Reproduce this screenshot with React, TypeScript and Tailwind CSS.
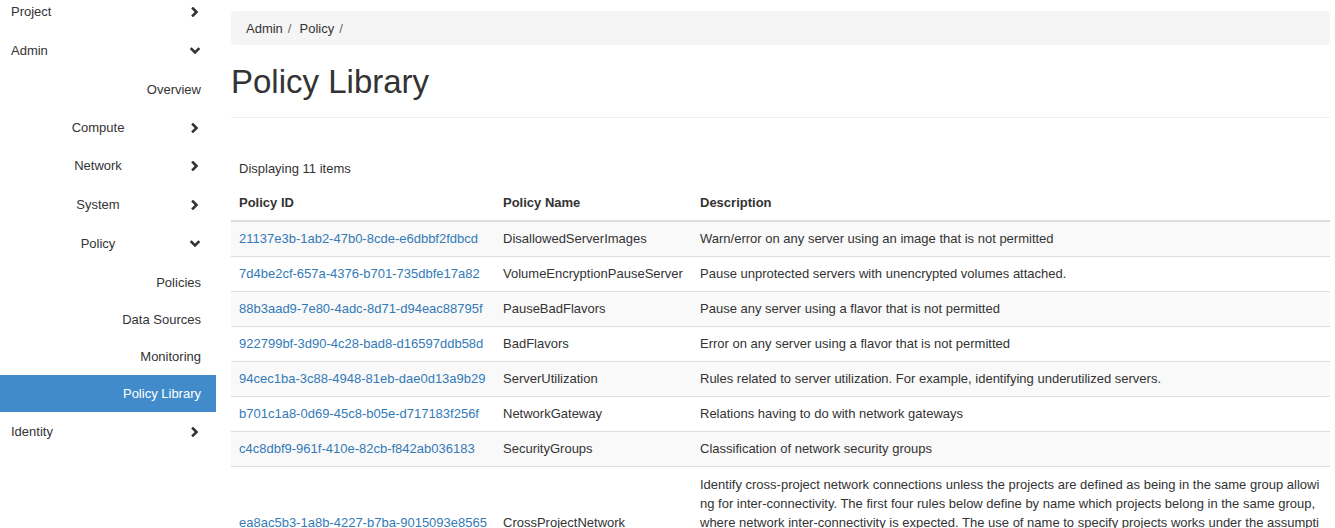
const Chevron = ({ down }: { down?: boolean }) => (
  <svg width="10" height="10" viewBox="0 0 10 10" className="shrink-0">
    {down ? (
      <polyline points="1.5,3 5,6.5 8.5,3" fill="none" stroke="#333" strokeWidth="2.6" strokeLinecap="square" />
    ) : (
      <polyline points="3,1.5 6.5,5 3,8.5" fill="none" stroke="#333" strokeWidth="2.6" strokeLinecap="square" />
    )}
  </svg>
)

const rows = [
  ["21137e3b-1ab2-47b0-8cde-e6dbbf2fdbcd", "DisallowedServerImages", "Warn/error on any server using an image that is not permitted"],
  ["7d4be2cf-657a-4376-b701-735dbfe17a82", "VolumeEncryptionPauseServer", "Pause unprotected servers with unencrypted volumes attached."],
  ["88b3aad9-7e80-4adc-8d71-d94eac88795f", "PauseBadFlavors", "Pause any server using a flavor that is not permitted"],
  ["922799bf-3d90-4c28-bad8-d16597ddb58d", "BadFlavors", "Error on any server using a flavor that is not permitted"],
  ["94cec1ba-3c88-4948-81eb-dae0d13a9b29", "ServerUtilization", "Rules related to server utilization. For example, identifying underutilized servers."],
  ["b701c1a8-0d69-45c8-b05e-d717183f256f", "NetworkGateway", "Relations having to do with network gateways"],
  ["c4c8dbf9-961f-410e-82cb-f842ab036183", "SecurityGroups", "Classification of network security groups"],
  [
    "ea8ac5b3-1a8b-4227-b7ba-9015093e8565",
    "CrossProjectNetwork",
    "Identify cross-project network connections unless the projects are defined as being in the same group allowing for inter-connectivity. The first four rules below define by name which projects belong in the same group, where network inter-connectivity is expected. The use of name to specify projects works under the assumption of having unique project names; the Keystone Identity v3 API does not require project names to be unique. Adjust the first four rules to use project IDs instead of project names where necessary.",
  ],
]

const Sidebar = () => {
  return (
    <div className="w-[216px] shrink-0 -mt-[8px] text-[13px] text-[#333]">
      <div className="h-[39px] flex items-center pl-[11px] pr-[16px]">
        <span className="flex-1">Project</span>
        <Chevron />
      </div>
      <div className="h-[40px] flex items-center pl-[11px] pr-[16px]">
        <span className="flex-1">Admin</span>
        <Chevron down />
      </div>
      <div className="h-[38px] flex items-center justify-end pr-[15px]">Overview</div>
      <div className="h-[37px] flex items-center pl-[6px] pr-[16px]">
        <span className="flex-1 text-center">Compute</span>
        <Chevron />
      </div>
      <div className="h-[39px] flex items-center pl-[6px] pr-[16px]">
        <span className="flex-1 text-center">Network</span>
        <Chevron />
      </div>
      <div className="h-[39px] flex items-center pl-[6px] pr-[16px]">
        <span className="flex-1 text-center">System</span>
        <Chevron />
      </div>
      <div className="h-[40px] flex items-center pl-[6px] pr-[16px]">
        <span className="flex-1 text-center">Policy</span>
        <Chevron down />
      </div>
      <div className="h-[37px] flex items-center justify-end pr-[15px]">Policies</div>
      <div className="h-[37px] flex items-center justify-end pr-[15px]">Data Sources</div>
      <div className="h-[37px] flex items-center justify-end pr-[15px]">Monitoring</div>
      <div className="h-[37px] flex items-center justify-end pr-[15px] bg-[#428bca] text-white">Policy Library</div>
      <div className="h-[39px] flex items-center pl-[11px] pr-[16px]">
        <span className="flex-1">Identity</span>
        <Chevron />
      </div>
    </div>
  )
}

export default function App() {
  return (
    <div className="flex w-[1335px] h-[528px] overflow-hidden bg-white text-[13px] text-[#333]" style={{ fontFamily: '"Liberation Sans", Arial, sans-serif' }}>
      <Sidebar />
      <div className="flex-1 pl-[15px] pr-[5px] pt-[11px]">
        <div className="h-[34px] flex items-center pt-[1px] px-[15px] bg-[#f5f5f5] rounded-[4px] gap-[5px]">
          <span>Admin</span>
          <span className="text-[#666] pr-[3px]">/</span>
          <span>Policy</span>
          <span className="text-[#666]">/</span>
        </div>
        <h1 className="mt-[19px] text-[33px] leading-[36px] text-[#333]">Policy Library</h1>
        <div className="mt-[17px] border-t border-[#eee]"></div>
        <div className="mt-[34px] h-[34px] flex items-center px-[8px]">Displaying 11 items</div>
        <table className="w-full border-collapse table-fixed">
          <colgroup>
            <col className="w-[264px]" />
            <col className="w-[197px]" />
            <col />
          </colgroup>
          <thead>
            <tr className="border-b-2 border-[#ddd]">
              <th className="text-left font-bold px-[8px] py-[8px] leading-[18px]">Policy ID</th>
              <th className="text-left font-bold px-[8px] py-[8px] leading-[18px]">Policy Name</th>
              <th className="text-left font-bold px-[8px] py-[8px] leading-[18px]">Description</th>
            </tr>
          </thead>
          <tbody>
            {rows.map((r, i) => (
              <tr key={r[0]} className={`border-t border-[#ddd] ${i % 2 === 0 ? "bg-[#f9f9f9]" : "bg-white"}`}>
                <td className="px-[8px] py-[8px] leading-[18px] align-middle text-[#337ab7] whitespace-nowrap">{r[0]}</td>
                <td className="px-[8px] py-[8px] leading-[18px] align-middle whitespace-nowrap">{r[1]}</td>
                <td className={`px-[8px] py-[8px] align-middle break-all ${i === rows.length - 1 ? "leading-[19px]" : "leading-[18px]"}`}>{r[2]}</td>
              </tr>
            ))}
          </tbody>
        </table>
      </div>
    </div>
  )
}
